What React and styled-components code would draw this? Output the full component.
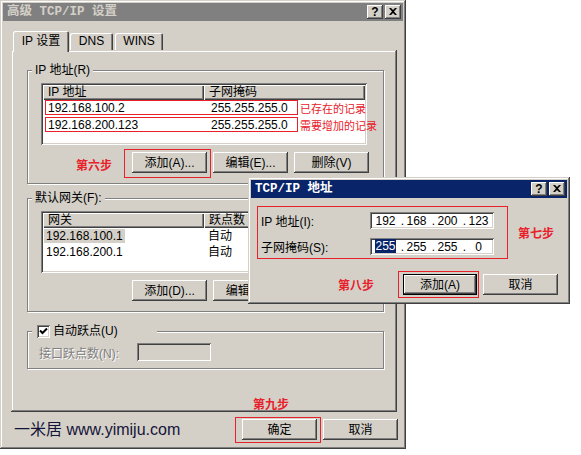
import React from 'react';
import styled, { createGlobalStyle, css } from 'styled-components';

const FACE = '#d4d0c8';
const SHADOW = '#808080';
const DARK = '#404040';
const HILITE = '#ffffff';
const RED = '#e8202a';
const NAVY = '#0a246a';

const UI_FONT = `"Liberation Sans", "Noto Sans CJK SC", sans-serif`;
const TITLE_FONT = `"Liberation Mono", "Noto Sans CJK SC", monospace`;
const CJK_FONT = `"Noto Sans CJK SC", "Liberation Sans", sans-serif`;

const windowBevel = css`
  box-shadow: inset -1px -1px ${DARK}, inset 1px 1px ${FACE}, inset -2px -2px ${SHADOW}, inset 2px 2px ${HILITE};
`;
const buttonBevel = css`
  box-shadow: inset -1px -1px ${DARK}, inset 1px 1px ${HILITE}, inset -2px -2px ${SHADOW}, inset 2px 2px ${FACE};
`;
const defaultBevel = css`
  box-shadow: inset 0 0 0 1px #000, inset -2px -2px ${DARK}, inset 2px 2px ${HILITE}, inset -3px -3px ${SHADOW}, inset 3px 3px ${FACE};
`;
const sunkenBevel = css`
  box-shadow: inset 1px 1px ${SHADOW}, inset -1px -1px ${HILITE}, inset 2px 2px ${DARK}, inset -2px -2px ${FACE};
`;

const GlobalStyle = createGlobalStyle`
  html, body { margin: 0; padding: 0; background: #fff; }
  body { font-family: ${UI_FONT}; font-size: 12px; color: #000; }
  * { box-sizing: border-box; }
`;

const Stage = styled.div`
  position: relative;
  width: 581px;
  height: 455px;
  overflow: hidden;
  background: #fff;
`;

const Window = styled.div`
  width: 406px;
  height: 449px;
  padding: 3px;
  background: ${FACE};
  ${windowBevel};
  display: flex;
  flex-direction: column;
`;

const Dialog = styled.div`
  position: absolute;
  left: 248px;
  top: 177px;
  width: 322px;
  height: 127px;
  padding: 3px;
  background: ${FACE};
  ${windowBevel};
  display: flex;
  flex-direction: column;
`;

const TitleBar = styled.div`
  flex-shrink: 0;
  height: 18px;
  display: flex;
  align-items: center;
  justify-content: space-between;
  padding: 0 2px 0 4px;
  background: ${p => (p.$active ? NAVY : SHADOW)};
  color: ${p => (p.$active ? '#fff' : FACE)};
  font-family: ${TITLE_FONT};
  font-weight: bold;
  font-size: 12.5px;
  line-height: 18px;
  white-space: pre;
`;

const CaptionButtons = styled.div`
  display: flex;
  gap: 2px;
`;

const CaptionButton = styled.div`
  width: 16px;
  height: 14px;
  background: ${FACE};
  ${buttonBevel};
  display: flex;
  align-items: center;
  justify-content: center;
  color: #000;
  font-family: "Liberation Sans", sans-serif;
  font-weight: bold;
  font-size: 12px;
  line-height: 1;
  padding-bottom: 1px;
`;

const TabStrip = styled.div`
  display: flex;
  align-items: flex-end;
  margin-top: 10px;
  padding-left: 10px;
  height: 19px;
`;

const Tab = styled.div`
  position: relative;
  z-index: ${p => (p.$active ? 1 : 0)};
  width: ${p => p.$w}px;
  height: ${p => (p.$active ? 21 : 17)}px;
  margin-bottom: ${p => (p.$active ? -2 : 0)}px;
  margin-right: ${p => p.$mr || 0}px;
  background: ${FACE};
  border-radius: 2px 2px 0 0;
  box-shadow: inset 1px 1px ${HILITE}, inset -1px 0 ${DARK}, inset -2px 0 ${SHADOW};
  display: flex;
  align-items: ${p => (p.$active ? 'flex-start' : 'center')};
  padding-top: ${p => (p.$active ? 3 : 0)}px;
  justify-content: center;
  line-height: 15px;
`;

const Panel = styled.div`
  height: 362px;
  margin: 0 6px 0 8px;
  padding: 20px 13px 0 16px;
  background: ${FACE};
  ${windowBevel};
  display: flex;
  flex-direction: column;
`;

const Group = styled.div`
  width: 357px;
  margin-top: ${p => p.$mt || 0}px;
  border: 1px solid ${SHADOW};
  box-shadow: inset 1px 1px ${HILITE}, 1px 1px 0 ${HILITE};
  padding: 0 15px ${p => p.$pb ?? 10}px 13px;
  display: flex;
  flex-direction: column;
`;

const Legend = styled.div`
  align-self: flex-start;
  display: flex;
  align-items: center;
  gap: 3px;
  height: 15px;
  margin: -8px 0 0 -9px;
  padding: 0 ${p => p.$pr ?? 3}px 0 ${p => p.$pl ?? 3}px;
  background: ${FACE};
  line-height: 15px;
  white-space: pre;
`;

const ListBox = styled.div`
  width: 326px;
  height: 62px;
  margin-top: 5px;
  padding: 2px;
  background: #fff;
  ${sunkenBevel};
  display: flex;
  flex-direction: column;
`;

const HeaderRow = styled.div`
  display: flex;
  flex-shrink: 0;
  height: 15px;
`;

const HeaderCell = styled.div`
  width: ${p => p.$w}px;
  flex-shrink: 0;
  height: 15px;
  padding-left: 5px;
  background: ${FACE};
  box-shadow: inset 1px 1px ${HILITE}, inset -1px -1px ${DARK}, inset -2px -2px ${SHADOW};
  line-height: 15px;
  white-space: pre;
`;

const Row = styled.div`
  display: flex;
  align-items: center;
  height: ${p => p.$h || 16}px;
  margin-top: ${p => p.$mt || 0}px;
  white-space: pre;
  line-height: 14px;
`;

const MarkBox = styled.div`
  display: flex;
  align-items: center;
  flex-shrink: 0;
  width: 253px;
  height: 100%;
  margin-left: 2px;
  border: 1px solid ${RED};
`;

const Cell = styled.div`
  width: ${p => (p.$w ? `${p.$w}px` : 'auto')};
  flex-shrink: 0;
  padding-left: ${p => p.$pl ?? 2}px;
`;

const Selected = styled.span`
  background: ${p => (p.$focus ? NAVY : FACE)};
  color: ${p => (p.$focus ? '#fff' : '#000')};
  padding: 0 ${p => (p.$focus ? 0 : 2)}px;
  line-height: 15px;
`;

const RedNote = styled.span`
  flex-shrink: 0;
  margin-left: 2px;
  color: ${RED};
  font-family: ${CJK_FONT};
  font-size: 11px;
`;

const ButtonRow = styled.div`
  display: flex;
  align-items: center;
  justify-content: ${p => p.$justify || 'flex-end'};
  gap: 6px;
  width: ${p => (p.$w ? `${p.$w}px` : 'auto')};
  margin-top: ${p => p.$mt || 0}px;
`;

const Button = styled.div`
  width: ${p => p.$w || 75}px;
  height: 21px;
  flex-shrink: 0;
  background: ${FACE};
  ${p => (p.$default ? defaultBevel : buttonBevel)};
  display: flex;
  align-items: center;
  justify-content: center;
  white-space: pre;
  line-height: 1;
  padding-top: 1px;
`;

const Marked = styled.div`
  position: relative;
  display: flex;
  &::after {
    content: "";
    position: absolute;
    left: ${p => -p.$l}px;
    top: ${p => -p.$t}px;
    right: ${p => -p.$r}px;
    bottom: ${p => -p.$b}px;
    border: 1px solid ${RED};
    pointer-events: none;
  }
`;

const Step = styled.span`
  color: ${RED};
  font-family: ${CJK_FONT};
  font-weight: bold;
  font-size: 12px;
  line-height: 14px;
  margin-right: ${p => p.$mr || 0}px;
  margin-left: ${p => p.$ml || 0}px;
  margin-top: ${p => p.$mt || 0}px;
`;

const FloatingStep = styled(Step)`
  position: absolute;
  left: ${p => p.$x}px;
  top: ${p => p.$y}px;
  white-space: pre;
`;

const CheckBox = styled.div`
  width: 13px;
  height: 13px;
  flex-shrink: 0;
  background: #fff;
  ${sunkenBevel};
  display: flex;
  align-items: center;
  justify-content: center;
`;

const FieldLine = styled.div`
  display: flex;
  align-items: center;
  margin-top: ${p => p.$mt || 0}px;
`;

const DisabledLabel = styled.span`
  width: 98px;
  margin-left: -2px;
  color: ${SHADOW};
  text-shadow: 1px 1px 0 ${HILITE};
  white-space: pre;
`;

const DisabledInput = styled.div`
  width: 74px;
  height: 18px;
  background: ${FACE};
  ${sunkenBevel};
`;

const BottomBar = styled.div`
  display: flex;
  align-items: center;
  margin-top: 7px;
  padding: 0 5px 0 11px;
  height: 21px;
`;

const Watermark = styled.span`
  font-family: "Liberation Sans", "Noto Sans CJK SC", sans-serif;
  font-size: 16px;
  color: #14143a;
  margin-top: -4px;
  white-space: pre;
  margin-right: auto;
`;

const DialogBody = styled.div`
  padding: 8px 9px 0 6px;
  display: flex;
  flex-direction: column;
`;

const DialogTop = styled.div`
  display: flex;
  align-items: center;
`;

const RedFrame = styled.div`
  width: 251px;
  height: 53px;
  border: 1px solid ${RED};
  padding: 5px 13px 3px 3px;
  display: flex;
  flex-direction: column;
  gap: 9px;
`;

const FieldRow = styled.div`
  display: flex;
  align-items: center;
  justify-content: space-between;
  height: 17px;
  white-space: pre;
`;

const IpBox = styled.div`
  width: 124px;
  height: 17px;
  padding-left: 3px;
  background: #fff;
  ${sunkenBevel};
  display: flex;
  align-items: center;
  line-height: 14px;
`;

const IpField = styled.span`
  width: 25px;
  text-align: center;
`;

const IpDot = styled.span`
  width: 6px;
  text-align: right;
`;

const CloseGlyph = () => (
  <svg width="8" height="7" viewBox="0 0 8 7">
    <path d="M0 0H2L4 2L6 0H8L5 3.5L8 7H6L4 5L2 7H0L3 3.5Z" fill="#000" />
  </svg>
);

const CheckGlyph = () => (
  <svg width="9" height="9" viewBox="0 0 9 9">
    <path d="M1 3.5L3.5 6L8 1.5" stroke="#000" strokeWidth="2" fill="none" />
  </svg>
);

const Caption = ({ title, active }) => (
  <TitleBar $active={active}>
    <span>{title}</span>
    <CaptionButtons>
      <CaptionButton>?</CaptionButton>
      <CaptionButton><CloseGlyph /></CaptionButton>
    </CaptionButtons>
  </TitleBar>
);

const IpAddress = ({ parts, focusFirst }) => (
  <IpBox>
    {parts.map((p, i) => (
      <React.Fragment key={i}>
        {i > 0 && <IpDot>.</IpDot>}
        <IpField>{i === 0 && focusFirst ? <Selected $focus>{p}</Selected> : p}</IpField>
      </React.Fragment>
    ))}
  </IpBox>
);

export default function App() {
  return (
    <>
      <GlobalStyle />
      <Stage>
        <Window>
          <Caption title="高级 TCP/IP 设置" />
          <TabStrip>
            <Tab $active $w={56} $mr={1}>IP 设置</Tab>
            <Tab $w={43} $mr={2}>DNS</Tab>
            <Tab $w={48}>WINS</Tab>
          </TabStrip>
          <Panel>
            <Group>
              <Legend>IP 地址(R)</Legend>
              <ListBox>
                <HeaderRow>
                  <HeaderCell $w={161}>IP 地址</HeaderCell>
                  <HeaderCell $w={161}>子网掩码</HeaderCell>
                </HeaderRow>
                <Row $h={15}>
                  <MarkBox>
                    <Cell $w={165}>192.168.100.2</Cell>
                    <Cell $pl={0}>255.255.255.0</Cell>
                  </MarkBox>
                  <RedNote>已存在的记录</RedNote>
                </Row>
                <Row $h={15} $mt={2}>
                  <MarkBox>
                    <Cell $w={165}>192.168.200.123</Cell>
                    <Cell $pl={0}>255.255.255.0</Cell>
                  </MarkBox>
                  <RedNote>需要增加的记录</RedNote>
                </Row>
              </ListBox>
              <ButtonRow $w={328} $mt={7}>
                <Step $mr={14} $mt={5}>第六步</Step>
                <Marked $l={8} $t={3} $r={4} $b={5}>
                  <Button>添加(A)...</Button>
                </Marked>
                <Button>编辑(E)...</Button>
                <Button>删除(V)</Button>
              </ButtonRow>
            </Group>

            <Group $mt={14}>
              <Legend>默认网关(F):</Legend>
              <ListBox>
                <HeaderRow>
                  <HeaderCell $w={161}>网关</HeaderCell>
                  <HeaderCell $w={161}>跃点数</HeaderCell>
                </HeaderRow>
                <Row>
                  <Cell $w={165} $pl={1}><Selected>192.168.100.1</Selected></Cell>
                  <Cell $pl={0}>自动</Cell>
                </Row>
                <Row>
                  <Cell $w={165} $pl={3}>192.168.200.1</Cell>
                  <Cell $pl={0}>自动</Cell>
                </Row>
              </ListBox>
              <ButtonRow $w={328} $mt={7}>
                <Button>添加(D)...</Button>
                <Button>编辑(T)...</Button>
                <Button>删除(M)</Button>
              </ButtonRow>
            </Group>

            <Group $mt={19} $pb={7}>
              <Legend $pl={5} $pr={39}>
                <CheckBox><CheckGlyph /></CheckBox>
                <span>自动跃点(U)</span>
              </Legend>
              <FieldLine $mt={4}>
                <DisabledLabel>接口跃点数(N):</DisabledLabel>
                <DisabledInput />
              </FieldLine>
            </Group>
          </Panel>
          <BottomBar>
            <Watermark>一米居 www.yimiju.com</Watermark>
            <ButtonRow>
              <Marked $l={7} $t={2} $r={4} $b={3}>
                <FloatingStep $x={11} $y={-22}>第九步</FloatingStep>
                <Button>确定</Button>
              </Marked>
              <Button>取消</Button>
            </ButtonRow>
          </BottomBar>
        </Window>

        <Dialog>
          <Caption title="TCP/IP 地址" active />
          <DialogBody>
            <DialogTop>
              <RedFrame>
                <FieldRow>
                  <span>IP 地址(I):</span>
                  <IpAddress parts={['192', '168', '200', '123']} />
                </FieldRow>
                <FieldRow>
                  <span>子网掩码(S):</span>
                  <IpAddress parts={['255', '255', '255', '0']} focusFirst />
                </FieldRow>
              </RedFrame>
              <Step $ml={10}>第七步</Step>
            </DialogTop>
            <ButtonRow $mt={15}>
              <Step $mr={23}>第八步</Step>
              <Marked $l={5} $t={3} $r={2} $b={3}>
                <Button $default $w={74}>添加(A)</Button>
              </Marked>
              <Button>取消</Button>
            </ButtonRow>
          </DialogBody>
        </Dialog>
      </Stage>
    </>
  );
}
